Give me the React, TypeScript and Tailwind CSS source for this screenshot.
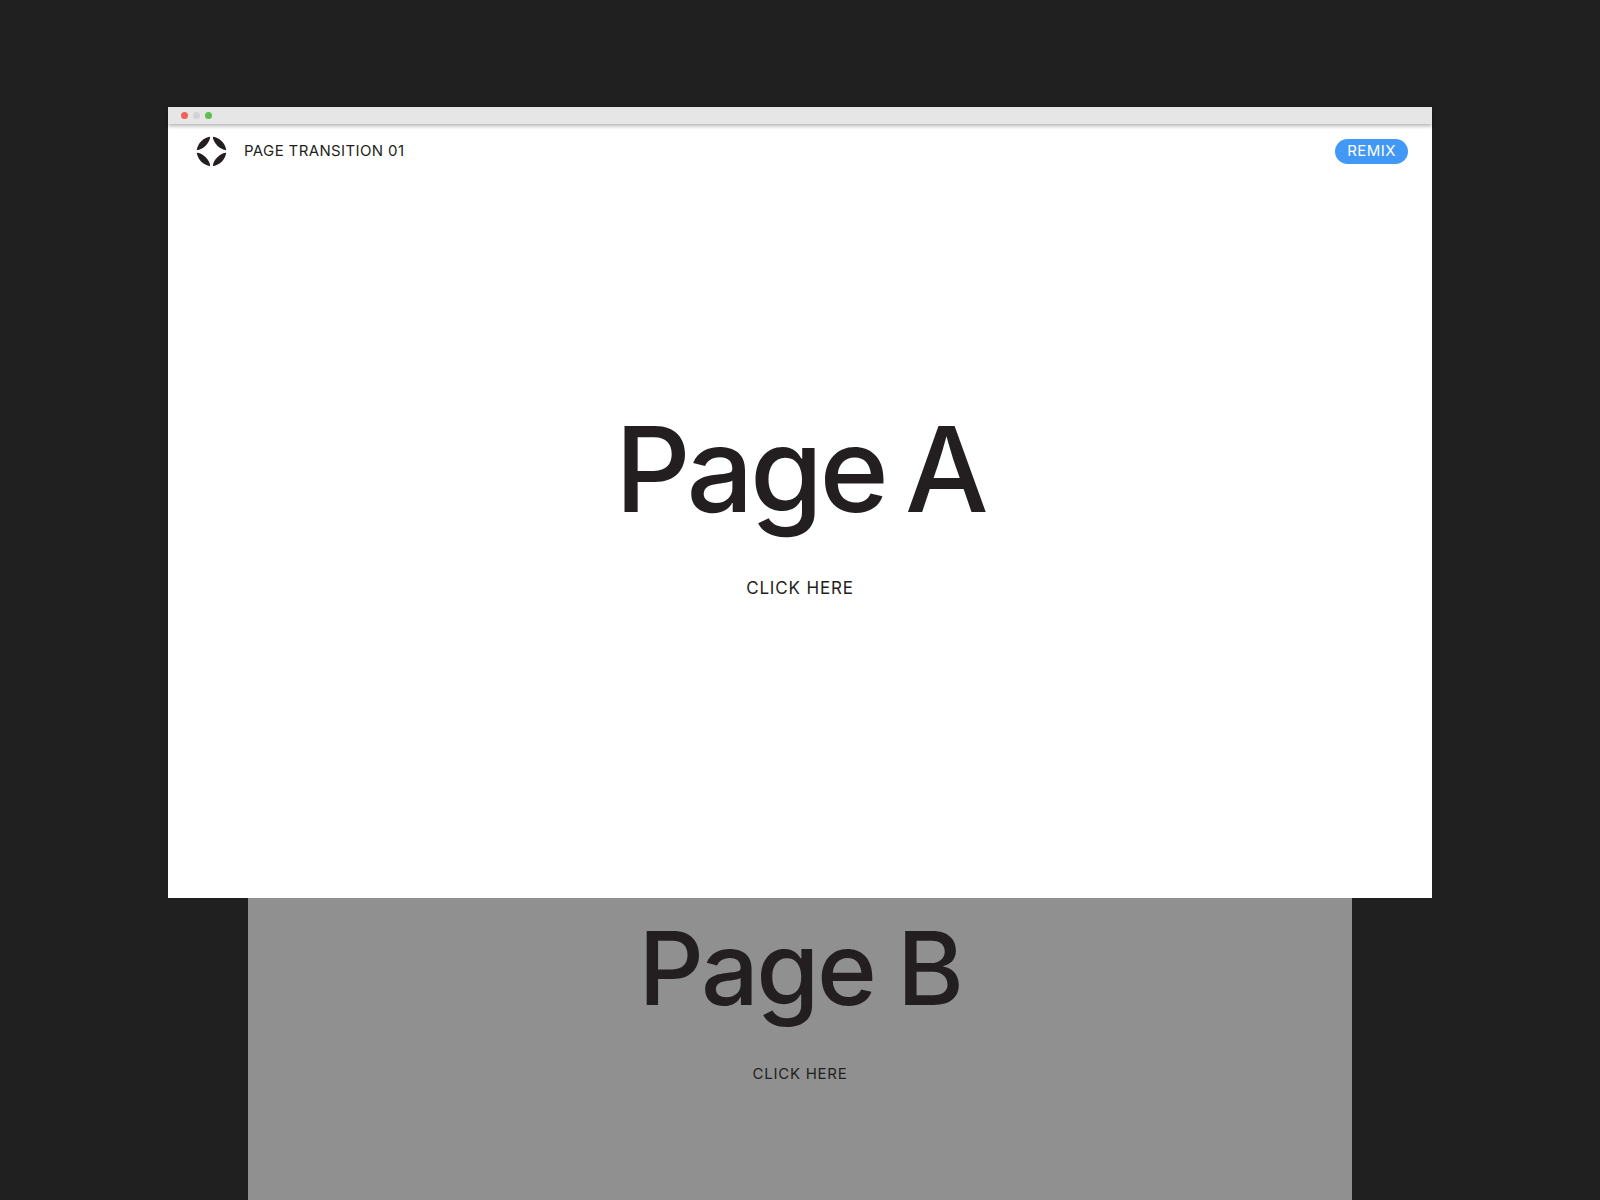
export default function App() {
  return (
    <div className="flex h-[1200px] flex-col items-center overflow-hidden bg-[#202020] pt-[107px] font-['Inter',sans-serif] text-[#231f20]">
      <div className="flex h-[791px] w-[1264px] shrink-0 flex-col bg-white">
        <div className="flex h-[17px] shrink-0 items-center gap-[5px] bg-[#e6e6e6] pl-[13px] shadow-[0_2px_4px_rgba(0,0,0,0.3)]">
          <span className="h-[7px] w-[7px] rounded-full bg-[#f2605a]" />
          <span className="h-[7px] w-[7px] rounded-full bg-[#d2d2d2]" />
          <span className="h-[7px] w-[7px] rounded-full bg-[#5cbf50]" />
        </div>

        <div className="flex items-center justify-between pl-[28px] pr-[24px] pt-[12px]">
          <div className="flex items-center gap-[17px]">
            <svg viewBox="0 0 32 32" className="h-[31px] w-[31px]" fill="#231f20">
              <path d="M14.6 .8C7.5 1.8 1.8 7.5 .8 14.6C7 14.5 14.5 7 14.6 .8Z" />
              <path d="M17.4 .8C24.5 1.8 30.2 7.5 31.2 14.6C25 14.5 17.5 7 17.4 .8Z" />
              <path d="M14.6 31.2C7.5 30.2 1.8 24.5 .8 17.4C7 17.5 14.5 25 14.6 31.2Z" />
              <path d="M17.4 31.2C24.5 30.2 30.2 24.5 31.2 17.4C25 17.5 17.5 25 17.4 31.2Z" />
            </svg>
            <span className="text-[15px] font-normal tracking-[0.025em]">PAGE TRANSITION 01</span>
          </div>
          <button className="h-[25px] rounded-full bg-[#4298f5] px-[12px] text-[15px] tracking-[0.03em] text-white">REMIX</button>
        </div>

        <div className="flex flex-col items-center pt-[243px]">
          <h1 className="text-[118px] leading-[118px] font-[450] tracking-[-0.03em] [word-spacing:-0.07em]">Page A</h1>
          <a className="mt-[48px] text-[17px] tracking-[0.05em]">CLICK HERE</a>
        </div>
      </div>

      <div className="flex w-[1104px] flex-1 flex-col items-center bg-[#909090] pt-[19px]">
        <h2 className="text-[102px] leading-[102px] font-[450] tracking-[-0.025em] [word-spacing:-0.02em]">Page B</h2>
        <a className="mt-[44px] text-[15px] tracking-[0.05em]">CLICK HERE</a>
      </div>
    </div>
  );
}
